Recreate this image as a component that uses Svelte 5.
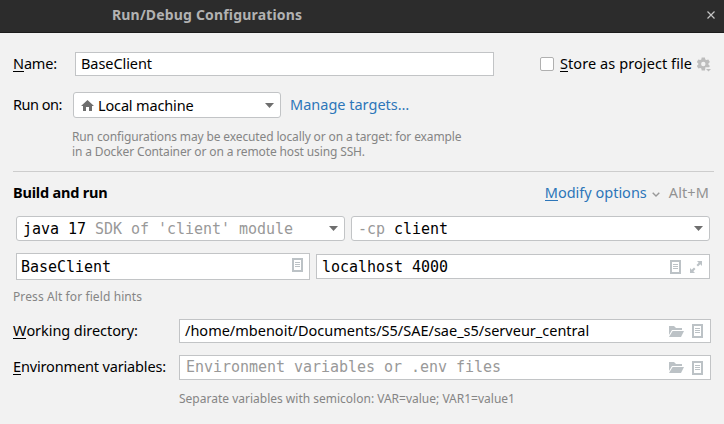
<script>
  let name = 'BaseClient';
  let directory = '/home/mbenoit/Documents/S5/SAE/sae_s5/serveur_central';
</script>

{#snippet arrow()}
  <svg class="arrow" width="9" height="5" viewBox="0 0 9 5"><path d="M0 0h9L4.5 5z" fill="#6e6e6e" /></svg>
{/snippet}

{#snippet doc()}
  <svg class="doc" width="11" height="14" viewBox="0 0 11 14">
    <path d="M1 1h9v12H1z" fill="#fff" stroke="#bcc2c6" stroke-width="2" />
    <path d="M3 4.5h5M3 6.5h5M3 8.5h5" stroke="#bcc2c6" />
  </svg>
{/snippet}

{#snippet folder()}
  <svg class="folder" width="15" height="11" viewBox="0 0 15 11">
    <path d="M0 9V0h5l2 2h6v2H3z" fill="#bcc2c6" />
    <path d="M3.6 5H15l-3 6H0z" fill="#bcc2c6" />
  </svg>
{/snippet}

<main>
  <header>
    <h1>Run/Debug Configurations</h1>
    <svg width="8" height="8" viewBox="0 0 8 8"><path d="M.5.5l7 7M7.5.5l-7 7" stroke="#c4c4c4" stroke-width="1.2" /></svg>
  </header>

  <section class="name-row">
    <span class="label name-label"><u>N</u>ame:</span>
    <div class="field name-field"><span class="name-value">{name}</span></div>
    <i class="checkbox"></i>
    <span class="store"><u>S</u>tore as project file</span>
    <svg class="gear" width="14" height="15" viewBox="0 0 14 15">
      <g fill="#bdbdbd">
        <path fill-rule="evenodd" d="M4.7.5h3.2l.4 2 1.100.6 1.900-.7 1.600 2.700-1.500 1.300v1.200l1.500 1.300-.8 1.300H8.400L8 13.500H4.700l-.4-2-1.100-.6-1.900.7L-.2 8.900l1.500-1.300V6.400L-.2 5.100l1.500-2.700 1.900.7 1.100-.6zM6.300 4.800a2.200 2.200 0 1 0 0 4.400 2.200 2.200 0 0 0 0-4.400z" />
        <path d="M9 12h5l-2.500 2.500z" />
      </g>
    </svg>
  </section>

  <section class="run-row">
    <span class="label run-label">Run on:</span>
    <div class="field combo target">
      <svg class="home" width="13" height="11" viewBox="0 0 13 11"><path d="M6.5 0L13 6h-2v5H8V7H5v4H2V6H0z" fill="#6e6e6e" /></svg>
      <span class="machine">Local machine</span>
      {@render arrow()}
    </div>
    <a class="manage">Manage targets…</a>
  </section>
  <p class="help target-help">
    Run configurations may be executed locally or on a target: for example<br />
    in a Docker Container or on a remote host using SSH.
  </p>

  <hr />

  <section class="build-row">
    <h2>Build and run</h2>
    <a class="modify"><u>M</u>odify options</a>
    <svg class="chevron" width="8" height="5" viewBox="0 0 8 5"><path d="M.7.7L4 4 7.3.7" fill="none" stroke="#999" stroke-width="1.4" /></svg>
    <span class="shortcut">Alt+M</span>
  </section>

  <section class="pair first">
    <div class="field combo mono jdk"><span>java 17 <em>SDK of 'client' module</em></span>{@render arrow()}</div>
    <div class="field combo mono cp"><span><em>-cp</em> client</span>{@render arrow()}</div>
  </section>
  <section class="pair second">
    <div class="field mono main-class"><span>BaseClient</span>{@render doc()}</div>
    <div class="field mono args">
      <span>localhost 4000</span>{@render doc()}
      <svg class="expand" width="12" height="12" viewBox="0 0 12 12">
        <path d="M7 0h5v5l-1.7-1.7L8 5.5 6.5 4l2.2-2.3zM0 7l1.7 1.7L4 6.5 5.5 8l-2.200 2.300L5 12H0z" fill="#bcc2c6" />
      </svg>
    </div>
  </section>
  <p class="help alt-help">Press Alt for field hints</p>

  <section class="wide wd">
    <span class="label wd-label"><u>W</u>orking directory:</span>
    <div class="field"><span class="path">{directory}</span>{@render folder()}{@render doc()}</div>
  </section>
  <section class="wide env">
    <span class="label env-label"><u>E</u>nvironment variables:</span>
    <div class="field mono"><span><em>Environment variables or .env files</em></span>{@render folder()}{@render doc()}</div>
  </section>
  <p class="help env-help">Separate variables with semicolon: VAR=value; VAR1=value1</p>
</main>

<style>
  :global(body) { margin: 0; }
  * { box-sizing: border-box; }
  main {
    width: 724px;
    height: 424px;
    overflow: hidden;
    background: #f2f2f2;
    color: #000;
    font: 14.5px/20px "Noto Sans", sans-serif;
    white-space: nowrap;
  }
  header {
    height: 33px;
    display: flex;
    align-items: center;
    background: #2c2c2c;
    border-bottom: 1px solid #1c1c1c;
    padding: 0 9px 3px 112px;
  }
  h1 { flex: 1; margin: 0; font-size: 14px; line-height: 20px; font-weight: 700; color: #b2b2b2; letter-spacing: 0.17px; }
  h2 { flex: 1; margin: 0; padding-bottom: 2px; font-size: 14.5px; line-height: 20px; font-weight: 700; letter-spacing: -0.2px; }
  u { text-decoration: none; box-shadow: inset 0 -1px currentColor; display: inline-block; height: 19px; line-height: 20px; vertical-align: top; }
  section { display: flex; align-items: center; }
  svg { flex: none; display: block; }
  em { font-style: normal; color: #999; }
  a { color: #2d76b9; }
  .label, .store, .modify, .shortcut, .manage { flex: none; padding-bottom: 2px; }
  .label { letter-spacing: -0.15px; }
  .field {
    display: flex;
    align-items: center;
    background: #fff;
    border: 1px solid #c2c4c6;
    padding-left: 5px;
    height: 24px;
  }
  .field > span { flex: 1; }
  .combo { border-radius: 3px; }
  .mono { font-family: "DejaVu Sans Mono", monospace; font-size: 15px; letter-spacing: -0.03px; }

  .name-row { height: 24px; margin-top: 19px; padding-left: 13px; }
  .name-label { width: 62px; }
  .name-field { width: 419px; }
  .name-value { letter-spacing: -0.07px; padding-bottom: 2px; }
  .checkbox { width: 14px; height: 14px; margin-left: 46px; background: #fff; border: 1px solid #b0b0b0; border-radius: 2px; }
  .store { width: 132px; margin-left: 6px; letter-spacing: 0.08px; }
  .gear { margin-left: 5px; }

  .run-row { height: 26px; margin-top: 16px; padding-left: 13px; }
  .run-label { width: 60px; letter-spacing: -0.5px; }
  .target { width: 208px; height: 26px; padding: 0 6px 0 7px; }
  .machine { margin-left: 4px; letter-spacing: -0.15px; }
  .manage { margin-left: 9px; }
  .help { margin: 0; font-size: 12px; line-height: 15px; color: #858585; }
  .target-help { padding: 11px 0 0 72px; height: 53px; letter-spacing: -0.13px; }
  hr { margin: 0 10px 0 13px; border: 0; height: 1px; background: #cdcdcd; }

  .build-row { height: 20px; margin-top: 11px; padding: 0 15px 0 13px; }
  .modify { margin-right: 1px; }
  .chevron { margin-left: 4px; margin-top: 3px; }
  .shortcut { margin-left: 9px; color: #929292; letter-spacing: 0.1px; }
  .pair { padding-left: 16px; gap: 6px; height: 25px; }
  .first { margin-top: 13px; }
  .first .field { height: 25px; padding: 0 6px; }
  .jdk { width: 329px; }
  .cp { width: 359px; }
  .second { margin-top: 12px; height: 27px; }
  .main-class { width: 294px; height: 27px; padding: 0 6px 0 4px; }
  .main-class :global(.doc) { margin-bottom: 4px; }
  .args { width: 394px; height: 25px; padding-right: 7px; }
  .expand { margin-left: 9px; }
  .alt-help { padding: 9px 0 0 13px; height: 24px; letter-spacing: 0.1px; }

  .wide { padding-left: 13px; height: 25px; }
  .wide .label { width: 166px; }
  .wd .label { letter-spacing: -0.07px; }
  .wide .field { width: 532px; padding-right: 7px; }
  .path { padding-bottom: 2px; }
  .wd { height: 24px; margin-top: 15px; }
  .env { margin-top: 12px; }
  .env .label { padding-bottom: 3px; }
  .env .field { height: 25px; padding-left: 6px; }
  .env .field > span { padding-bottom: 1px; }
  .folder { margin-right: 8px; }
  .env-help { padding: 11px 0 0 179px; }
</style>
